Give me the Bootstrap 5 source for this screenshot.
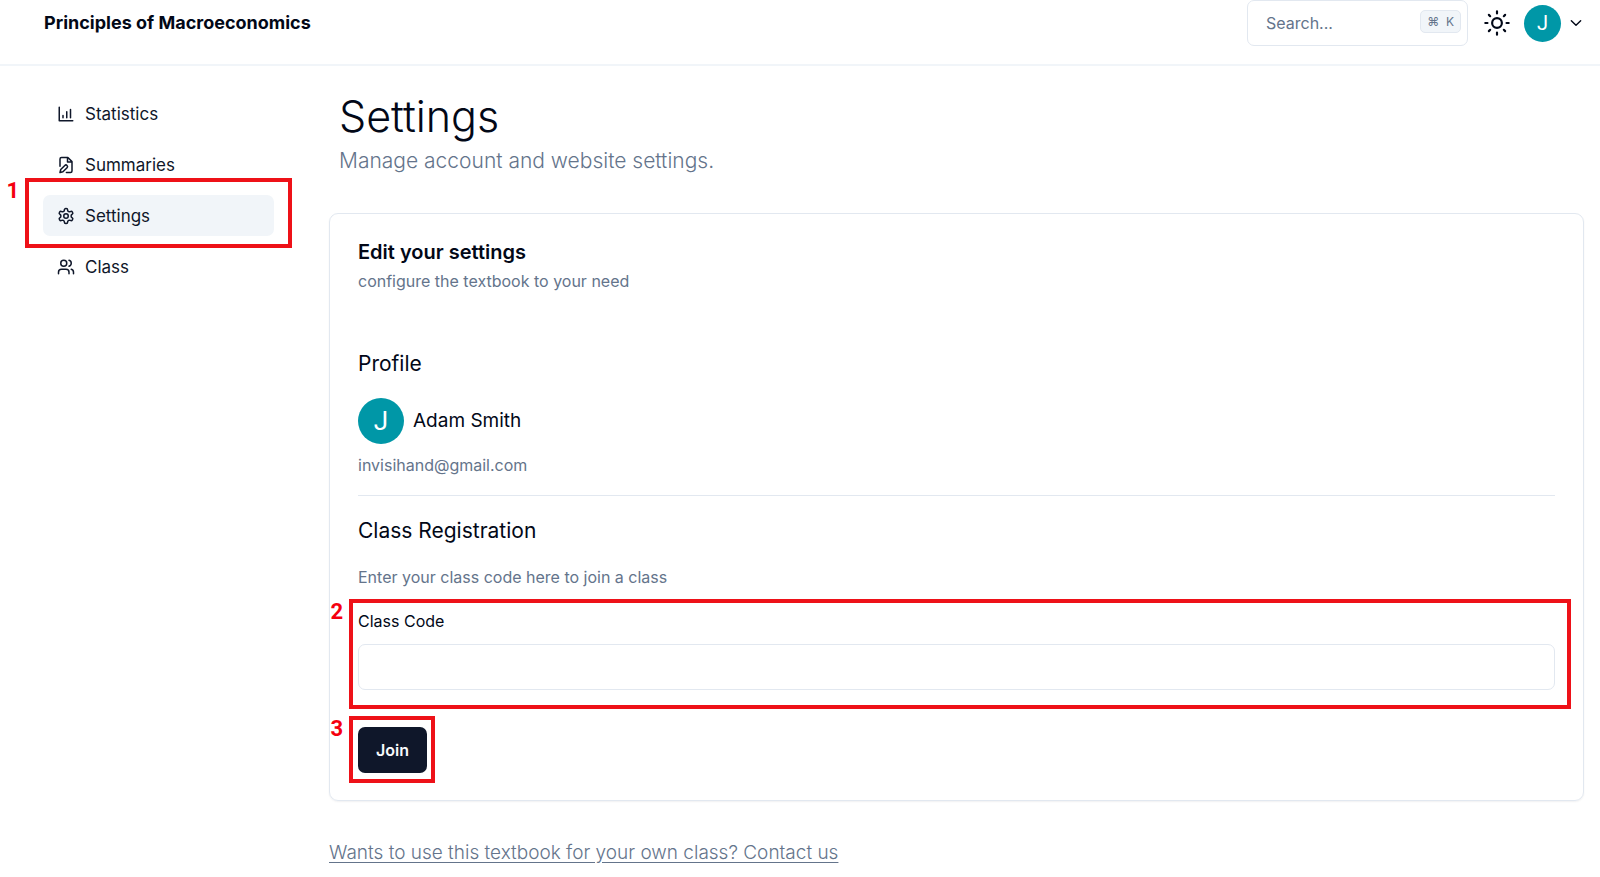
<!DOCTYPE html>
<html lang="en">
<head>
<meta charset="utf-8">
<meta name="viewport" content="width=device-width, initial-scale=1">
<title>Settings - Principles of Macroeconomics</title>
<link href="https://cdn.jsdelivr.net/npm/bootstrap@5.3.0/dist/css/bootstrap.min.css" rel="stylesheet">
<style>
  :root { --ink: #020817; --muted: #64748b; --line: #e2e8f0; --soft: #f1f5f9; --teal: #0097a7; --callout: #ee1118; }
  body { font-family: Inter, "Liberation Sans", sans-serif; font-size: 16px; line-height: 20px; color: var(--ink); background: #fff; }
  h1, h2, h3, p { margin: 0; }
  svg { fill: none; stroke: currentColor; stroke-width: 2; stroke-linecap: round; stroke-linejoin: round; flex: none; }
  .topbar { border-bottom: 2px solid var(--soft); padding: 0 17px 18px 44px; }
  .brand { font-size: 18px; line-height: 46px; font-weight: 700; color: var(--ink); }
  .search-btn { width: 221px; height: 46px; padding: 0 6px 0 18px; border: 1px solid var(--line); border-radius: 7px; color: var(--muted); background: #fff; }
  .keys { height: 23px; padding: 0 6px; margin-bottom: 3px; font-size: 12px; line-height: 21px; border: 1px solid var(--line); border-radius: 5px; background: var(--soft); }
  .icon-btn { border: 0; padding: 0; background: none; color: var(--ink); }
  .account { margin-left: 14px; }
  .avatar { width: 46px; height: 46px; background: var(--teal); color: #fff; font-family: Roboto, sans-serif; font-size: 26px; }
  .avatar-sm { width: 37px; height: 37px; font-size: 20px; }
  .side { flex: 0 0 274px; padding: 27px 0 0 43px; }
  .side-list { gap: 10px; }
  .side-link { gap: 10px; height: 41px; padding: 0 14px; border-radius: 7px; font-size: 17px; color: #0f172a; text-decoration: none; }
  .side-link.current { background: var(--soft); }
  .main-pane { padding: 27px 16px 11px 55px; }
  .page-head { padding: 0 10px; margin-bottom: 36px; }
  .page-title { font-size: 43px; line-height: 46px; font-weight: 300; margin-bottom: 6px; }
  .page-sub { font-size: 21px; line-height: 32px; font-weight: 300; color: var(--muted); }
  .panel { border: 1px solid var(--line); border-radius: 9px; padding: 28px 28px 27px; box-shadow: 0 1px 2px rgba(15, 23, 42, .06); }
  .panel-head { margin-bottom: 59px; }
  .panel-title { font-size: 20px; line-height: 20px; font-weight: 600; margin-bottom: 9px; }
  .section-title { font-size: 21px; line-height: 28px; font-weight: 400; }
  .note { color: var(--muted); }
  .person { gap: 9px; margin: 20px 0 11px; font-size: 19px; }
  .rule { height: 1px; border: 0; margin: 20px 0 21px; background: var(--line); opacity: 1; }
  .join-form { margin-top: 22px; }
  .code-label { margin-bottom: 13px; }
  .code-input { height: 46px; border: 1px solid var(--line); border-radius: 7px; }
  .join-wrap { width: fit-content; margin-top: 37px; }
  .join-btn { height: 46px; padding: 0 18px; border: 0; border-radius: 7px; background: #0f172a; color: #f8fafc; font-weight: 600; }
  .contact-line { margin-top: 38px; line-height: 28px; }
  .contact { font-size: 19px; font-weight: 300; color: var(--muted); text-underline-offset: 3px; }
  /* numbered callouts drawn over the controls */
  .callout { position: absolute; border: 4px solid var(--callout); pointer-events: none; }
  .callout span { position: absolute; right: 100%; top: -2px; margin-right: 10px; color: #f5000f; font: 700 22px/22px Roboto, sans-serif; }
  .callout-nav { inset: -17px -18px -12px -18px; }
  .callout-code { inset: -12px -16px -19px -9px; }
  .callout-join { inset: -11px -8px -10px -9px; }
</style>
</head>
<body>
<header class="topbar d-flex align-items-start justify-content-between">
  <a class="brand text-decoration-none" href="#">Principles of Macroeconomics</a>
  <div class="d-flex align-items-center">
    <button type="button" class="search-btn d-flex align-items-center justify-content-between">
      <span>Search...</span><span class="keys">⌘&nbsp; K</span>
    </button>
    <button type="button" class="icon-btn d-flex ms-3" aria-label="Toggle theme">
      <svg width="26" height="26" viewBox="0 0 24 24"><circle cx="12" cy="12" r="4.5"/><path d="M12 1.2v2M12 20.8v2M4.5 4.5l1.2 1.2M18.3 18.3l1.2 1.2M1.2 12h2M20.8 12h2M5.7 18.3l-1.2 1.2M19.5 4.5l-1.2 1.2"/></svg>
    </button>
    <button type="button" class="account icon-btn d-flex align-items-center gap-2" aria-label="Account menu">
      <span class="avatar avatar-sm rounded-circle d-flex align-items-center justify-content-center">J</span>
      <svg width="14" height="14" viewBox="0 0 24 24"><path stroke-width="2.4" d="m4 8 8 8 8-8"/></svg>
    </button>
  </div>
</header>

<div class="d-flex">
  <nav class="side" aria-label="Dashboard">
    <ul class="side-list list-unstyled d-flex flex-column m-0">
      <li><a class="side-link d-flex align-items-center" href="#"><svg width="18" height="18" viewBox="0 0 24 24"><path d="M3 3v18h18M18 17V6M13 17V9M8 17v-3"/></svg>Statistics</a></li>
      <li><a class="side-link d-flex align-items-center" href="#"><svg width="18" height="18" viewBox="0 0 24 24"><path d="M4 13.5V4a2 2 0 0 1 2-2h8.5L20 7.5V20a2 2 0 0 1-2 2h-5.5M14 2v6h6M10.42 12.61a2.1 2.1 0 1 1 2.97 2.97L7.95 21 4 22l.99-3.95 5.43-5.44Z"/></svg>Summaries</a></li>
      <li class="position-relative"><a class="side-link current d-flex align-items-center" href="#" aria-current="page"><svg width="18" height="18" viewBox="0 0 24 24"><path d="M12.22 2h-.44a2 2 0 0 0-2 2v.18a2 2 0 0 1-1 1.73l-.43.25a2 2 0 0 1-2 0l-.15-.08a2 2 0 0 0-2.73.73l-.22.38a2 2 0 0 0 .73 2.73l.15.1a2 2 0 0 1 1 1.72v.51a2 2 0 0 1-1 1.74l-.15.09a2 2 0 0 0-.73 2.73l.22.38a2 2 0 0 0 2.73.73l.15-.08a2 2 0 0 1 2 0l.43.25a2 2 0 0 1 1 1.73V20a2 2 0 0 0 2 2h.44a2 2 0 0 0 2-2v-.18a2 2 0 0 1 1-1.73l.43-.25a2 2 0 0 1 2 0l.15.08a2 2 0 0 0 2.73-.73l.22-.39a2 2 0 0 0-.73-2.73l-.15-.08a2 2 0 0 1-1-1.74v-.5a2 2 0 0 1 1-1.74l.15-.09a2 2 0 0 0 .73-2.73l-.22-.38a2 2 0 0 0-2.73-.73l-.15.08a2 2 0 0 1-2 0l-.43-.25a2 2 0 0 1-1-1.73V4a2 2 0 0 0-2-2z"/><circle cx="12" cy="12" r="3"/></svg>Settings</a>
        <div class="callout callout-nav"><span>1</span></div></li>
      <li><a class="side-link d-flex align-items-center" href="#"><svg width="18" height="18" viewBox="0 0 24 24"><path d="M16 21v-2a4 4 0 0 0-4-4H6a4 4 0 0 0-4 4v2M22 21v-2a4 4 0 0 0-3-3.87M16 3.13a4 4 0 0 1 0 7.75"/><circle cx="9" cy="7" r="4"/></svg>Class</a></li>
    </ul>
  </nav>

  <main class="main-pane flex-grow-1">
    <div class="page-head">
      <h1 class="page-title">Settings</h1>
      <p class="page-sub">Manage account and website settings.</p>
    </div>

    <section class="panel">
      <div class="panel-head">
        <h2 class="panel-title">Edit your settings</h2>
        <p class="note">configure the textbook to your need</p>
      </div>

      <h3 class="section-title">Profile</h3>
      <div class="person d-flex align-items-center">
        <span class="avatar rounded-circle d-flex align-items-center justify-content-center">J</span>Adam Smith
      </div>
      <p class="note">invisihand@gmail.com</p>
      <hr class="rule">

      <h3 class="section-title">Class Registration</h3>
      <form class="join-form">
        <p class="note">Enter your class code here to join a class</p>
        <div class="position-relative mt-4">
          <label class="code-label d-block" for="code">Class Code</label>
          <input class="code-input form-control shadow-none" id="code" type="text">
          <div class="callout callout-code"><span>2</span></div>
        </div>
        <div class="join-wrap position-relative">
          <button class="join-btn d-block" type="submit">Join</button>
          <div class="callout callout-join"><span>3</span></div>
        </div>
      </form>
    </section>
    <p class="contact-line"><a class="contact" href="#">Wants to use this textbook for your own class? Contact us</a></p>
  </main>
</div>
<script src="https://cdn.jsdelivr.net/npm/bootstrap@5.3.0/dist/js/bootstrap.bundle.min.js"></script>
</body>
</html>
